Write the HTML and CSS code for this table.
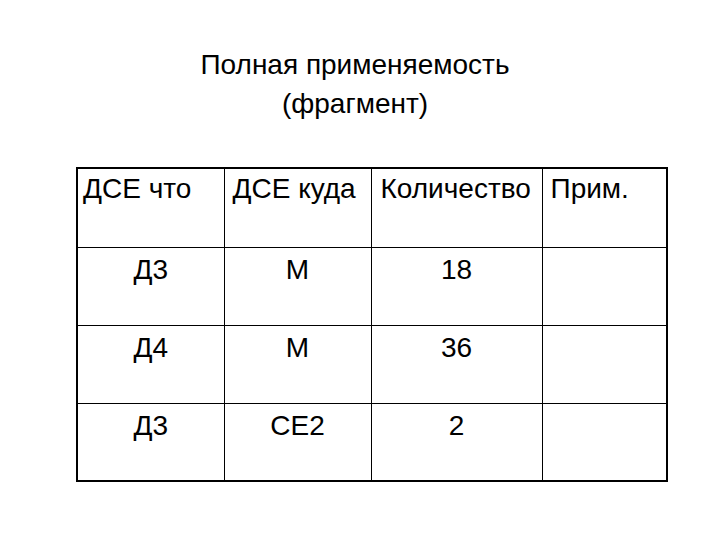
FILE: index.html
```html
<!DOCTYPE html>
<html lang="ru">
<head>
<meta charset="utf-8">
<link rel="stylesheet" href="styles.css">
</head>
<body>
<div class="page">
  <div class="title">
    <div>Полная применяемость</div>
    <div>(фрагмент)</div>
  </div>
  <table class="grid">
    <tr class="head">
      <td class="c1">ДСЕ что</td>
      <td class="c2">ДСЕ куда</td>
      <td class="c3">Количество</td>
      <td class="c4">Прим.</td>
    </tr>
    <tr><td>Д3</td><td>М</td><td>18</td><td></td></tr>
    <tr><td>Д4</td><td>М</td><td>36</td><td></td></tr>
    <tr><td>Д3</td><td>СЕ2</td><td>2</td><td></td></tr>
  </table>
</div>
</body>
</html>
```
FILE: styles.css
```css
html, body {
  margin: 0;
  padding: 0;
  background: #fff;
}
.page {
  width: 720px;
  height: 540px;
  font-family: "Liberation Sans", Arial, sans-serif;
  color: #000;
  padding-top: 45px;
  box-sizing: border-box;
}
.title {
  width: 710px;
  text-align: center;
  font-size: 28px;
  line-height: 39px;
}
.grid {
  margin-top: 44px;
  margin-left: 76px;
  border-collapse: collapse;
  border: 2px solid #000;
  font-size: 28px;
}
.grid td {
  border: 1px solid #000;
  height: 78px;
  box-sizing: border-box;
  vertical-align: top;
  text-align: center;
  padding: 6px 0 0 0;
  line-height: 32px;
}
.grid .head td {
  text-align: left;
  padding: 4px 0 0 8px;
  height: 79px;
}
.grid .head .c1 { padding-left: 5px; }
.grid .head .c3 { padding-left: 9px; }
.grid .c1 { width: 147px; }
.grid .c2 { width: 147px; }
.grid .c3 { width: 171px; }
.grid .c4 { width: 125px; }
```
